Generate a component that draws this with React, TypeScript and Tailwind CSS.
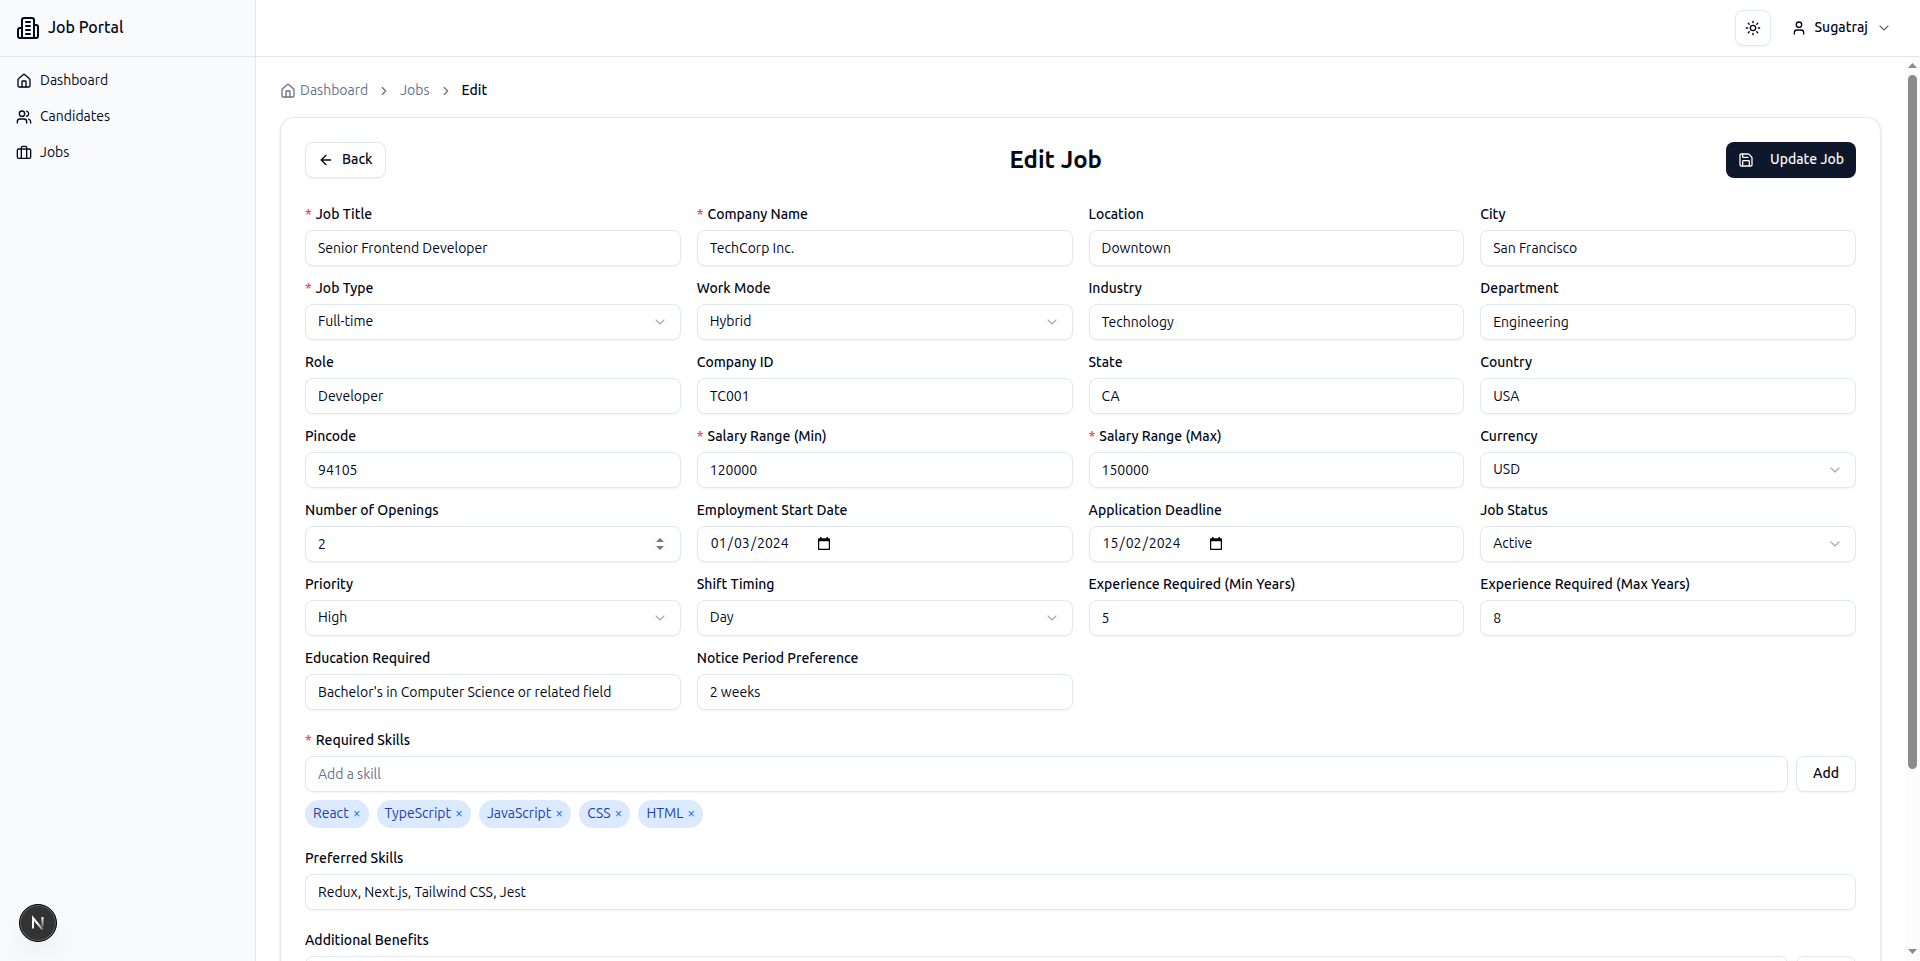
import { useId, useState, type ReactNode } from "react";
import {
  ArrowLeft,
  Briefcase,
  ChevronDown,
  ChevronRight,
  House,
  Save,
  Sun,
  User,
  Users,
} from "lucide-react";

const control =
  "h-9 w-full min-w-0 rounded-lg border border-[#e2e8f0] bg-white px-3 text-sm text-[#020817] shadow-xs outline-none placeholder:text-[#64748b] focus-visible:ring-2 focus-visible:ring-slate-300";

const outlineButton =
  "inline-flex h-9 items-center justify-center gap-2 rounded-lg border border-[#e2e8f0] bg-white text-sm font-medium text-[#020817] shadow-xs hover:bg-slate-50";

type FieldKind = "text" | "number" | "date" | "select";

interface FieldSpec {
  label: string;
  value: string;
  kind?: FieldKind;
  required?: boolean;
}

const fields: FieldSpec[] = [
  { label: "Job Title", value: "Senior Frontend Developer", required: true },
  { label: "Company Name", value: "TechCorp Inc.", required: true },
  { label: "Location", value: "Downtown" },
  { label: "City", value: "San Francisco" },
  { label: "Job Type", value: "Full-time", kind: "select", required: true },
  { label: "Work Mode", value: "Hybrid", kind: "select" },
  { label: "Industry", value: "Technology" },
  { label: "Department", value: "Engineering" },
  { label: "Role", value: "Developer" },
  { label: "Company ID", value: "TC001" },
  { label: "State", value: "CA" },
  { label: "Country", value: "USA" },
  { label: "Pincode", value: "94105" },
  { label: "Salary Range (Min)", value: "120000", required: true },
  { label: "Salary Range (Max)", value: "150000", required: true },
  { label: "Currency", value: "USD", kind: "select" },
  { label: "Number of Openings", value: "2", kind: "number" },
  { label: "Employment Start Date", value: "01/03/2024", kind: "date" },
  { label: "Application Deadline", value: "15/02/2024", kind: "date" },
  { label: "Job Status", value: "Active", kind: "select" },
  { label: "Priority", value: "High", kind: "select" },
  { label: "Shift Timing", value: "Day", kind: "select" },
  { label: "Experience Required (Min Years)", value: "5" },
  { label: "Experience Required (Max Years)", value: "8" },
  { label: "Education Required", value: "Bachelor's in Computer Science or related field" },
  { label: "Notice Period Preference", value: "2 weeks" },
];

function BuildingIcon() {
  return (
    <svg
      viewBox="0 0 24 24"
      className="size-6"
      fill="none"
      stroke="currentColor"
      strokeWidth="2"
      strokeLinecap="round"
      strokeLinejoin="round"
      aria-hidden="true"
    >
      <path d="M6 22V4a2 2 0 0 1 2-2h8a2 2 0 0 1 2 2v18Z" />
      <path d="M6 12H4a2 2 0 0 0-2 2v6a2 2 0 0 0 2 2h2" />
      <path d="M18 9h2a2 2 0 0 1 2 2v9a2 2 0 0 1-2 2h-2" />
      <path d="M10 6h4M10 10h4M10 14h4M10 18h4" />
    </svg>
  );
}

function CalendarGlyph() {
  return (
    <svg viewBox="0 0 12 13" className="h-[13px] w-3" aria-hidden="true">
      <path
        d="M2 0h1.5v1.2h5V0H10v1.2h1.2c.4 0 .8.3.8.8v10.2c0 .4-.4.8-.8.8H.8c-.4 0-.8-.4-.8-.8V2c0-.5.4-.8.8-.8H2ZM1.200 4.200v7.600h9.600V4.200Z"
        fill="#000"
        fillRule="evenodd"
      />
    </svg>
  );
}

function Label({ htmlFor, required, children }: { htmlFor: string; required?: boolean; children: ReactNode }) {
  return (
    <label htmlFor={htmlFor} className="mb-1 flex h-6 items-center text-sm font-medium">
      {required && <span className="mr-1 text-[#ef4444]">*</span>}
      {children}
    </label>
  );
}

function DateControl({ id, label, value }: { id: string; label: string; value: string }) {
  const [day, month, year] = value.split("/");
  return (
    <div className={`${control} flex items-center pb-0.5`}>
      <input id={id} className="w-[18px] px-px outline-none" defaultValue={day} maxLength={2} />
      <span>/</span>
      <input aria-label={`${label} month`} className="w-[18px] px-px outline-none" defaultValue={month} maxLength={2} />
      <span>/</span>
      <input aria-label={`${label} year`} className="w-[34px] px-px outline-none" defaultValue={year} maxLength={4} />
      <button type="button" className="ml-7" aria-label={`Pick ${label}`}>
        <CalendarGlyph />
      </button>
    </div>
  );
}

function Field({ label, value, kind = "text", required }: FieldSpec) {
  const id = useId();
  const [current, setCurrent] = useState(value);

  return (
    <div className="min-w-0">
      <Label htmlFor={id} required={required}>
        {label}
      </Label>
      {kind === "text" && (
        <input id={id} className={control} value={current} onChange={(e) => setCurrent(e.target.value)} />
      )}
      {kind === "select" && (
        <div className="relative">
          <select id={id} className={`${control} appearance-none pb-0.5`} defaultValue={value}>
            <option>{value}</option>
          </select>
          <ChevronDown
            className="pointer-events-none absolute top-2.5 right-[13px] size-4 text-[#64748b] opacity-60"
            strokeWidth={1.75}
          />
        </div>
      )}
      {kind === "date" && <DateControl id={id} label={label} value={value} />}
      {kind === "number" && (
        <div className={`${control} flex items-center justify-between`}>
          <input
            id={id}
            inputMode="numeric"
            className="min-w-0 grow bg-transparent text-sm outline-none"
            value={current}
            onChange={(e) => setCurrent(e.target.value)}
          />
          <div className="flex w-4 flex-col items-center gap-1 bg-[#fcfcfc] text-[#777]">
            <button type="button" aria-label="Increase" onClick={() => setCurrent(String(Number(current) + 1))}>
              <svg viewBox="0 0 8 4" className="block h-1 w-2" aria-hidden="true">
                <path d="M0 4 4 0l4 4Z" fill="currentColor" />
              </svg>
            </button>
            <button type="button" aria-label="Decrease" onClick={() => setCurrent(String(Number(current) - 1))}>
              <svg viewBox="0 0 8 4" className="block h-1 w-2" aria-hidden="true">
                <path d="M0 0h8L4 4Z" fill="currentColor" />
              </svg>
            </button>
          </div>
        </div>
      )}
    </div>
  );
}

function TagField({
  label,
  placeholder,
  initial,
  required,
}: {
  label: string;
  placeholder: string;
  initial: string[];
  required?: boolean;
}) {
  const id = useId();
  const [tags, setTags] = useState(initial);
  const [draft, setDraft] = useState("");

  const add = () => {
    if (draft.trim()) {
      setTags([...tags, draft.trim()]);
      setDraft("");
    }
  };

  return (
    <div>
      <Label htmlFor={id} required={required}>
        {label}
      </Label>
      <div className="flex gap-2">
        <input
          id={id}
          className={control}
          placeholder={placeholder}
          value={draft}
          onChange={(e) => setDraft(e.target.value)}
        />
        <button type="button" className={`${outlineButton} px-4 pb-0.5`} onClick={add}>
          Add
        </button>
      </div>
      <ul className="mt-2 flex flex-wrap gap-2">
        {tags.map((tag) => (
          <li
            key={tag}
            className="flex h-7 items-center gap-1 rounded-full bg-[#dbeafe] px-2 pb-0.5 text-sm text-[#1e40af]"
          >
            {tag}
            <button
              type="button"
              aria-label={`Remove ${tag}`}
              className="text-[#2563eb]"
              onClick={() => setTags(tags.filter((t) => t !== tag))}
            >
              ×
            </button>
          </li>
        ))}
      </ul>
    </div>
  );
}

function Sidebar() {
  const items = [
    { label: "Dashboard", icon: House },
    { label: "Candidates", icon: Users },
    { label: "Jobs", icon: Briefcase },
  ];
  return (
    <aside className="flex w-64 shrink-0 flex-col border-r border-[#e2e8f0] bg-[#f8fafc]">
      <div className="flex h-[57px] items-center gap-2 border-b border-[#e2e8f0] px-4">
        <BuildingIcon />
        <span className="pb-0.5 text-base font-medium">Job Portal</span>
      </div>
      <nav className="flex flex-col gap-1 p-2">
        {items.map(({ label, icon: Icon }) => (
          <a key={label} href="#" className="flex h-8 items-center gap-2 rounded-lg px-2 text-sm hover:bg-slate-100">
            <Icon className="size-4" />
            <span className="pb-0.5">{label}</span>
          </a>
        ))}
      </nav>
    </aside>
  );
}

function TopBar() {
  return (
    <header className="flex h-[57px] shrink-0 items-center justify-end gap-2 border-b border-[#e2e8f0] px-4">
      <button type="button" aria-label="Toggle theme" className={`${outlineButton} w-9`}>
        <Sun className="size-4" />
      </button>
      <button type="button" className="flex h-9 items-center gap-2 rounded-lg px-3 text-sm font-medium">
        <User className="size-4" />
        <span className="pb-0.5">Sugatraj</span>
        <ChevronDown className="size-4 opacity-60" strokeWidth={1.75} />
      </button>
    </header>
  );
}

function Breadcrumbs() {
  return (
    <nav aria-label="Breadcrumb" className="mb-4">
      <ol className="flex h-5 items-center gap-[9px] text-sm text-[#64748b]">
        <li>
          <a href="#" className="flex items-center gap-1">
            <House className="size-4" />
            <span className="pb-0.5">Dashboard</span>
          </a>
        </li>
        <ChevronRight className="size-3.5" />
        <li className="pb-0.5">
          <a href="#">Jobs</a>
        </li>
        <ChevronRight className="size-3.5" />
        <li className="pb-0.5 font-medium text-[#020817]">Edit</li>
      </ol>
    </nav>
  );
}

function ScrollRail() {
  return (
    <div
      aria-hidden="true"
      className="flex w-[15px] shrink-0 flex-col items-center gap-[7px] bg-[#fcfcfc] pt-1.5 pb-[7px] text-[#8b8b8b]"
    >
      <svg viewBox="0 0 9 5" className="h-[5px] w-[9px]">
        <path d="M0 5 4.500 0 9 5Z" fill="currentColor" />
      </svg>
      <div className="flex w-[9px] grow flex-col">
        <div className="h-4/5 rounded-full bg-[#8b8b8b]" />
      </div>
      <svg viewBox="0 0 9 5" className="h-[5px] w-[9px]">
        <path d="M0 0h9L4.500 5Z" fill="currentColor" />
      </svg>
    </div>
  );
}

function DevBadge() {
  return (
    <button
      type="button"
      aria-label="Open developer tools"
      className="fixed bottom-[19px] left-[19px] size-[38px] rounded-full border border-black bg-[#333] shadow-[inset_0_0_0_1px_#666,0_16px_32px_-8px_rgba(0,0,0,0.14)]"
    >
      <svg viewBox="0 0 36 36" className="size-full" fill="none" aria-hidden="true">
        <defs>
          <linearGradient id="badge-stem" x1="0" y1="12" x2="0" y2="24" gradientUnits="userSpaceOnUse">
            <stop stopColor="#fff" />
            <stop offset="1" stopColor="#fff" stopOpacity="0.1" />
          </linearGradient>
          <linearGradient id="badge-slash" x1="18" y1="18" x2="23" y2="25" gradientUnits="userSpaceOnUse">
            <stop stopColor="#fff" />
            <stop offset="1" stopColor="#fff" stopOpacity="0.3" />
          </linearGradient>
        </defs>
        <path d="M13 23.500V13L22.500 24.500" stroke="url(#badge-slash)" strokeWidth="2" />
        <path d="M22.500 12v9.500" stroke="url(#badge-stem)" strokeWidth="2" />
      </svg>
    </button>
  );
}

export default function App() {
  const preferredId = useId();
  return (
    <div className="flex h-screen overflow-hidden bg-white font-['Ubuntu','Open_Sans',sans-serif] text-[#020817]">
      <Sidebar />
      <div className="flex min-w-0 grow flex-col">
        <TopBar />
        <div className="flex min-h-0 grow">
          <main className="min-w-0 grow overflow-y-auto p-6 [scrollbar-width:none]">
            <Breadcrumbs />
            <form
              className="rounded-[14px] border border-[#e2e8f0] bg-white p-6 shadow-sm"
              onSubmit={(e) => e.preventDefault()}
            >
              <div className="mb-6 flex items-center justify-between">
                <button type="button" className={`${outlineButton} px-3`}>
                  <ArrowLeft className="size-4" />
                  <span className="pb-0.5">Back</span>
                </button>
                <h1 className="text-2xl font-semibold">Edit Job</h1>
                <button
                  type="submit"
                  className="inline-flex h-9 items-center gap-4 rounded-lg bg-[#0f172a] px-3 text-sm font-medium text-[#f8fafc] shadow-xs"
                >
                  <Save className="size-4" />
                  <span className="pb-0.5">Update Job</span>
                </button>
              </div>

              <div className="grid grid-cols-4 gap-x-4 gap-y-2.5">
                {fields.map((field) => (
                  <Field key={field.label} {...field} />
                ))}
              </div>

              <div className="mt-[18px] flex flex-col gap-[18px]">
                <TagField
                  label="Required Skills"
                  placeholder="Add a skill"
                  initial={["React", "TypeScript", "JavaScript", "CSS", "HTML"]}
                  required
                />
                <div>
                  <Label htmlFor={preferredId}>Preferred Skills</Label>
                  <input id={preferredId} className={control} defaultValue="Redux, Next.js, Tailwind CSS, Jest" />
                </div>
                <TagField label="Additional Benefits" placeholder="Add a benefit" initial={[]} />
              </div>
            </form>
          </main>
          <ScrollRail />
        </div>
      </div>
      <DevBadge />
    </div>
  );
}
